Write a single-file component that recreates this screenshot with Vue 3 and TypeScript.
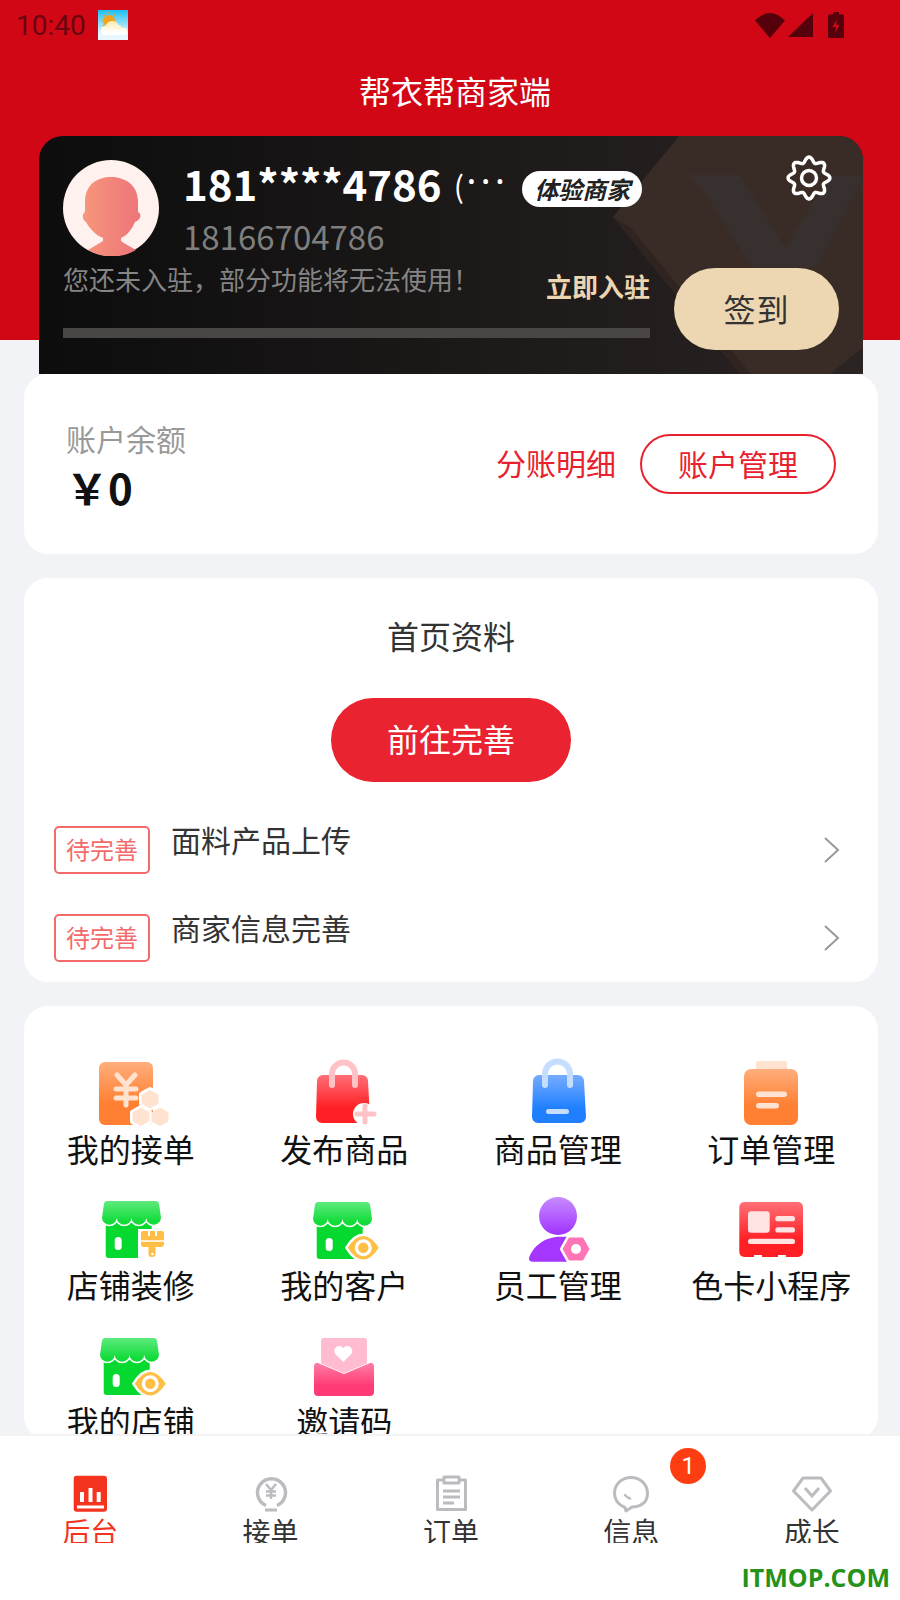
<template>
  <div class="page">
    <!-- shared icons, referenced through <use> below -->
    <svg class="icon-defs" width="0" height="0" aria-hidden="true">
      <defs>
        <linearGradient id="g-orange" x1="0" y1="0" x2="0" y2="1">
          <stop offset="0" stop-color="#ffae7c" />
          <stop offset="0.65" stop-color="#ff8033" />
        </linearGradient>
        <linearGradient id="g-red" x1="0" y1="0" x2="0" y2="1">
          <stop offset="0" stop-color="#ff6f76" />
          <stop offset="0.7" stop-color="#ff1f24" />
        </linearGradient>
        <linearGradient id="g-blue" x1="0" y1="0" x2="0" y2="1">
          <stop offset="0" stop-color="#76acff" />
          <stop offset="0.7" stop-color="#1f7fff" />
        </linearGradient>
        <linearGradient id="g-green" x1="0" y1="0" x2="0" y2="1">
          <stop offset="0" stop-color="#5eea7e" />
          <stop offset="0.85" stop-color="#12dc3a" />
        </linearGradient>
        <linearGradient id="g-purple" x1="0" y1="0" x2="0" y2="1">
          <stop offset="0" stop-color="#c78bff" />
          <stop offset="1" stop-color="#a032ff" />
        </linearGradient>
        <linearGradient id="g-pink" x1="0" y1="0" x2="0" y2="1">
          <stop offset="0" stop-color="#ff7fa6" />
          <stop offset="0.7" stop-color="#ff3a74" />
        </linearGradient>
        <linearGradient id="g-avatar" x1="0" y1="0" x2="1" y2="0">
          <stop offset="0" stop-color="#f7967c" />
          <stop offset="1" stop-color="#ed7479" />
        </linearGradient>
        <linearGradient id="g-sky" x1="0" y1="0" x2="0" y2="1">
          <stop offset="0" stop-color="#1dbff3" />
          <stop offset="0.8" stop-color="#e6f8fd" />
        </linearGradient>
        <linearGradient id="g-cloud" x1="0" y1="0" x2="0" y2="1">
          <stop offset="0" stop-color="#ffe9a8" />
          <stop offset="0.8" stop-color="#ffffff" />
        </linearGradient>
      </defs>

      <symbol id="ic-order" viewBox="0 0 80 70">
        <rect x="8" y="4" width="54" height="63" rx="6" fill="url(#g-orange)" />
        <path d="M26 17l9 10 9-10M35 27v20M25 31h20M25 40h20" fill="none" stroke="#ffe3d0" stroke-width="5" stroke-linecap="round" stroke-linejoin="round" />
        <g fill="#fff" stroke="#fff" stroke-width="6" stroke-linejoin="round">
          <polygon points="59,32 67,36.5 67,45.5 59,50 51,45.500 51,36.500" />
          <polygon points="50,50 58,54.500 58,63.500 50,68 42,63.500 42,54.500" />
        </g>
        <g fill="#ffe3d0" stroke="#ffe3d0" stroke-width="1" stroke-linejoin="round">
          <polygon points="59,32.500 67,37 67,45.500 59,50 51,45.500 51,37" />
          <polygon points="50,50 58,54.500 58,63 50,67.500 42,63 42,54.500" />
          <polygon points="69,50 77,54.500 77,63 69,67.500 61,63 61,54.500" />
        </g>
      </symbol>

      <symbol id="ic-publish" viewBox="0 0 80 70">
        <path d="M19 17h39a6 6 0 0 1 6 6l2 36a6 6 0 0 1-6 6H18a6 6 0 0 1-6-6l1-36a6 6 0 0 1 6-6z" fill="url(#g-red)" />
        <path d="M28 27V16a11 11 0 0 1 23 0v11" fill="none" stroke="#ffc2c7" stroke-width="6" stroke-linecap="round" />
        <circle cx="60" cy="56" r="11" fill="#fff" />
        <path d="M61 48v16M53 56h17" stroke="#ffc2c7" stroke-width="5" stroke-linecap="round" />
      </symbol>

      <symbol id="ic-goods" viewBox="0 0 80 70">
        <path d="M21 17h39a6 6 0 0 1 6 6l2 36a6 6 0 0 1-6 6H20a6 6 0 0 1-6-6l1-36a6 6 0 0 1 6-6z" fill="url(#g-blue)" />
        <path d="M27 27V16a12 12 0 0 1 25 0v11" fill="none" stroke="#c5deff" stroke-width="6" stroke-linecap="round" />
        <rect x="28" y="51" width="23" height="5" rx="2.500" fill="#c5deff" />
      </symbol>

      <symbol id="ic-orders" viewBox="0 0 80 70">
        <rect x="25" y="3" width="31" height="12" rx="2" fill="#ffe3d0" />
        <rect x="13" y="11" width="54" height="56" rx="7" fill="url(#g-orange)" />
        <rect x="25" y="33.500" width="31" height="5.500" rx="2.700" fill="#ffe3d0" />
        <rect x="25" y="45" width="23" height="5.500" rx="2.700" fill="#ffe3d0" />
      </symbol>

      <symbol id="ic-store" viewBox="0 0 80 70">
        <rect x="12.700" y="25" width="46" height="40" rx="3" fill="#05d92f" />
        <rect x="21.700" y="44" width="7" height="13" rx="3.500" fill="#fff" />
        <path d="M14 8h49a3 3 0 0 1 3 2.500L68 25a7.400 7.400 0 0 1-14.750 0a7.400 7.400 0 0 1-14.750 0a7.400 7.400 0 0 1-14.750 0a7.400 7.400 0 0 1-14.750 0L11 10.500A3 3 0 0 1 14 8z" fill="url(#g-green)" stroke="#fff" stroke-width="3" paint-order="stroke" />
      </symbol>

      <symbol id="ic-store-brush" viewBox="0 0 80 70">
        <use href="#ic-store" x="2" y="-1" width="80" height="70" />
        <path d="M47 35h28v34H47z" fill="#fff" />
        <path d="M50 39a2 2 0 0 1 2-2h5v5h2v-5h5v5h2v-5h5a2 2 0 0 1 2 2v11a3 3 0 0 1-3 3h-5.500v6.500a3.500 3.500 0 0 1-7 0V53H53a3 3 0 0 1-3-3z" fill="#ffbe45" />
        <path d="M50 47h23" stroke="#fff" stroke-width="1.500" />
        <circle cx="61.500" cy="60" r="1.300" fill="#fff" />
      </symbol>

      <symbol id="ic-store-eye" viewBox="0 0 80 70">
        <use href="#ic-store" width="80" height="70" />
        <path d="M43.800 53.700Q51 42 59.300 42Q67 42 74.800 53.700Q67 65.400 59.300 65.400Q51 65.400 43.800 53.700z" fill="#ffbe45" stroke="#fff" stroke-width="5" paint-order="stroke" />
        <circle cx="59.300" cy="53.700" r="8.500" fill="#fff" />
        <circle cx="59.300" cy="53.700" r="5.200" fill="#ffbe45" />
      </symbol>

      <symbol id="ic-staff" viewBox="0 0 80 70">
        <circle cx="40" cy="22" r="19" fill="url(#g-purple)" />
        <path d="M14 67.700a3 3 0 0 1-3-3.700C15 52 27 42.700 42 42.700H54V67.700z" fill="#a436ff" />
        <polygon points="44.500,55 51,43.500 65,43.500 71.500,55 65,66.500 51,66.500" fill="#ff74b4" stroke="#fff" stroke-width="5" stroke-linejoin="round" paint-order="stroke" />
        <circle cx="58" cy="55" r="5" fill="#fff" />
      </symbol>

      <symbol id="ic-palette" viewBox="0 0 80 70">
        <rect x="8.300" y="8" width="63.700" height="55" rx="5" fill="url(#g-red)" />
        <rect x="17" y="17.300" width="21.700" height="21.400" rx="3" fill="#ffe3e3" />
        <rect x="44.300" y="22" width="19.700" height="5.300" rx="2.600" fill="#ffe3e3" />
        <rect x="44.300" y="33.300" width="19.700" height="5.300" rx="2.600" fill="#ffe3e3" />
        <rect x="17" y="44.700" width="47" height="5.300" rx="2.600" fill="#ffe3e3" />
        <rect x="23" y="61" width="8" height="2" fill="#fff" />
        <rect x="47" y="61" width="8" height="2" fill="#fff" />
      </symbol>

      <symbol id="ic-invite" viewBox="0 0 80 70">
        <path d="M20 8h40a3 3 0 0 1 3 3v32H17V11a3 3 0 0 1 3-3z" fill="#ffbcd1" />
        <path d="M39.300 32l-8-8a5 5 0 0 1 8-6a5 5 0 0 1 8 6z" fill="#fff" />
        <path d="M10 36a3 3 0 0 1 4-3l26 11l26-11a3 3 0 0 1 4 3v26a4 4 0 0 1-4 4H14a4 4 0 0 1-4-4z" fill="url(#g-pink)" stroke="#fff" stroke-width="1.500" paint-order="stroke" />
      </symbol>
    </svg>

    <div class="main">
      <header class="status">
        <div class="status-left">
          <span class="clock">10:40</span>
          <svg class="weather" viewBox="0 0 30 30" width="30" height="30" aria-hidden="true">
            <rect width="30" height="30" fill="url(#g-sky)" />
            <circle cx="11" cy="11" r="6" fill="#f6a21e" />
            <path d="M11 2v2M3 10h2M5 4.500l1.500 1.500M17 4.500l-1.500 1.500M4.500 16l1.500-1" stroke="#f6a21e" stroke-width="1.200" />
            <path d="M7 25a4.500 4.500 0 0 1 .5-9a7 7 0 0 1 13-1a5.500 5.500 0 0 1 3.500 3a3.600 3.600 0 0 1 3 7z" fill="url(#g-cloud)" />
          </svg>
        </div>
        <div class="status-right">
          <svg viewBox="0 0 30 25" width="30" height="25" aria-hidden="true">
            <path d="M0 7.500Q15-7.500 30 7.500L15 25z" fill="#55000a" />
          </svg>
          <svg viewBox="0 0 25 24" width="25" height="24" aria-hidden="true">
            <path d="M25 0v24H0z" fill="#55000a" />
          </svg>
          <svg class="battery" viewBox="0 0 16 26" width="16" height="26" aria-hidden="true">
            <path d="M5 0h6v2.500h3.500a1.500 1.500 0 0 1 1.500 1.500v20.500a1.500 1.500 0 0 1-1.500 1.500H1.500A1.500 1.500 0 0 1 0 24.500V4a1.500 1.500 0 0 1 1.500-1.500H5z" fill="#55000a" />
            <path d="M9 7L4.500 15H8l-1 6 4.500-8H8z" fill="#d10716" />
          </svg>
        </div>
      </header>

      <h1 class="title">帮衣帮商家端</h1>

      <section class="vip">
        <svg class="vip-art" viewBox="0 0 824 238" aria-hidden="true">
          <polygon points="574,81 640,0 824,0 824,238 701,238" fill="#392c26" />
          <polygon points="824,211 791,238 824,238" fill="#2a2423" />
          <polygon points="574,81 592,92 712,238 701,238" fill="#2f2420" />
          <polygon points="649,39 701,39 746,112 791,40 824,40 778,131 713,131 664,54" fill="#38302f" />
        </svg>

        <div class="vip-top">
          <svg class="avatar" viewBox="0 0 96 96" aria-hidden="true">
            <circle cx="48" cy="48" r="48" fill="#fff1ee" />
            <path d="M48 17C35 17 22 24 22 42L22 52C19 54 19 60 23 62C28 71 35 76 40 78L40 81C35 84 30 87 25 90A48 48 0 0 0 73 90C68 87 62 84 58 81L58 78C63 76 68 71 72 62C78 60 79 54 75 52L75 42C75 24 61 17 48 17Z" fill="url(#g-avatar)" />
          </svg>
          <div class="vip-info">
            <div class="name-row">
              <span class="name">181****4786</span>
              <span class="name-paren">(</span>
              <span class="name-dots">•••</span>
              <span class="level">体验商家</span>
            </div>
            <div class="phone">18166704786</div>
          </div>
          <svg class="gear" viewBox="0 0 46 46" width="46" height="46" aria-hidden="true">
            <path :d="gearPath" fill="none" stroke="#fff" stroke-width="3.500" stroke-linejoin="round" />
            <circle cx="23" cy="23" r="7.500" fill="none" stroke="#fff" stroke-width="3.500" />
          </svg>
        </div>

        <div class="vip-bottom">
          <div class="vip-progress">
            <div class="notice-row">
              <span class="notice">您还未入驻，部分功能将无法使用！</span>
              <span class="join">立即入驻</span>
            </div>
            <div class="bar"></div>
          </div>
          <button class="sign" type="button">签到</button>
        </div>
      </section>

      <section class="card balance">
        <div class="balance-left">
          <div class="balance-label">账户余额</div>
          <div class="balance-value">￥0</div>
        </div>
        <div class="balance-right">
          <span class="split">分账明细</span>
          <button class="manage" type="button">账户管理</button>
        </div>
      </section>

      <section class="card profile">
        <div class="profile-title">首页资料</div>
        <button class="go" type="button">前往完善</button>
        <div class="todo-list">
          <div v-for="todo in todos" :key="todo" class="todo">
            <span class="todo-tag">待完善</span>
            <span class="todo-text">{{ todo }}</span>
            <svg class="chevron" viewBox="0 0 18 26" width="18" height="26" aria-hidden="true">
              <path d="M2 1l13 12L2 25" fill="none" stroke="#98989d" stroke-width="2" />
            </svg>
          </div>
        </div>
      </section>

      <section class="card tools">
        <div v-for="tool in tools" :key="tool.label" class="tool">
          <svg class="tool-icon" viewBox="0 0 80 70" width="80" height="70" aria-hidden="true">
            <use :href="`#ic-${tool.icon}`" width="80" height="70" />
          </svg>
          <span class="tool-label">{{ tool.label }}</span>
        </div>
      </section>
    </div>

    <nav class="tabbar">
      <div class="tab active">
        <svg viewBox="0 0 40 40" width="40" height="40" aria-hidden="true">
          <rect x="3.700" y="1.700" width="33.300" height="36" rx="3" fill="#f5341f" />
          <path d="M12 28V18M20.500 28V14M28.700 28V18" stroke="#fff" stroke-width="4" />
          <path d="M7 33h27" stroke="#fff" stroke-width="3" />
        </svg>
        <span class="tab-label">后台</span>
      </div>
      <div class="tab">
        <svg viewBox="0 0 40 40" width="40" height="40" aria-hidden="true">
          <path d="M15 31.500a14 14 0 1 1 11 0" fill="none" stroke="#bcbcc0" stroke-width="3.500" />
          <rect x="14" y="34.500" width="12" height="3" fill="#bcbcc0" />
          <path d="M15 10l5 6 5-6M20 16v9M15 17.500h10M15 21.500h10" fill="none" stroke="#bcbcc0" stroke-width="2.500" />
        </svg>
        <span class="tab-label">接单</span>
      </div>
      <div class="tab">
        <svg viewBox="0 0 40 40" width="40" height="40" aria-hidden="true">
          <path d="M13 6H6.500v29.500h28V6H28M13 3h15v6H13z" fill="none" stroke="#bcbcc0" stroke-width="3" stroke-linejoin="round" />
          <path d="M12 17h17M12 23h17M12 29h11" stroke="#bcbcc0" stroke-width="3" />
        </svg>
        <span class="tab-label">订单</span>
      </div>
      <div class="tab">
        <svg viewBox="0 0 40 40" width="40" height="40" aria-hidden="true">
          <path d="M14 33.500C7 31 3.500 25 3.500 19.500C3.500 10 11 3.500 20 3.500s16.500 6.500 16.500 16S29 33 21 33l-6 4z" fill="none" stroke="#bcbcc0" stroke-width="3" stroke-linejoin="round" />
          <path d="M14 21q2 2.500 5 3.500" fill="none" stroke="#bcbcc0" stroke-width="2.500" stroke-linecap="round" />
        </svg>
        <span class="tab-label">信息</span>
        <span class="badge">1</span>
      </div>
      <div class="tab">
        <svg viewBox="0 0 40 40" width="40" height="40" aria-hidden="true">
          <path d="M11 4h18l9.500 13L20 36 1.500 17z" fill="none" stroke="#bcbcc0" stroke-width="3" stroke-linejoin="round" />
          <path d="M13 14l7 8 7-8" fill="none" stroke="#bcbcc0" stroke-width="3" />
        </svg>
        <span class="tab-label">成长</span>
      </div>
    </nav>

    <div class="watermark">ITMOP.COM</div>
  </div>
</template>

<script setup lang="ts">
interface Tool {
  label: string;
  icon: string;
}

const todos = ['面料产品上传', '商家信息完善']

const tools: Tool[] = [
  {label: '我的接单', icon: 'order'},
  {label: '发布商品', icon: 'publish'},
  {label: '商品管理', icon: 'goods'},
  {label: '订单管理', icon: 'orders'},
  {label: '店铺装修', icon: 'store-brush'},
  {label: '我的客户', icon: 'store-eye'},
  {label: '员工管理', icon: 'staff'},
  {label: '色卡小程序', icon: 'palette'},
  {label: '我的店铺', icon: 'store-eye'},
  {label: '邀请码', icon: 'invite'},
]

// Scalloped outline for the settings gear: radius swings with the tooth angle.
function buildGear(teeth: number, base: number, swing: number): string {
  const points: string[] = []
  for (let i = 0; i < 160; i++) {
    const a = (i / 160) * Math.PI * 2
    const r = base + swing * Math.cos(teeth * a)
    points.push(`${(23 + r * Math.sin(a)).toFixed(2)} ${(23 - r * Math.cos(a)).toFixed(2)}`)
  }
  return `M${points.join('L')}Z`
}

const gearPath = buildGear(8, 18.3, 2.6)
</script>

<style>
html,
body {
  margin: 0;
  background: #f2f3f7;
}
</style>

<style scoped>
.page {
  position: relative;
  display: flex;
  flex-direction: column;
  width: 900px;
  height: 1600px;
  overflow: hidden;
  background: linear-gradient(#d10716 340px, #f2f3f7 340px);
  font-family: "Noto Sans CJK SC", "Noto Sans", sans-serif;
  color: #333;
}

.icon-defs {
  position: absolute;
}

.main {
  flex: 1;
  min-height: 0;
  overflow: hidden;
}

.status {
  display: flex;
  align-items: center;
  justify-content: space-between;
  height: 50px;
  padding: 0 56px 0 16px;
  box-sizing: border-box;
}

.status-left,
.status-right {
  display: flex;
  align-items: center;
}

.status-left {
  gap: 12px;
}

.status-right {
  gap: 3px;
}

.battery {
  margin-left: 12px;
}

.clock {
  font-family: Roboto, sans-serif;
  font-size: 28px;
  color: #6a0510;
}

.title {
  margin: 0;
  padding-left: 10px;
  height: 86px;
  line-height: 80px;
  font-size: 32px;
  font-weight: 400;
  text-align: center;
  color: #fff;
}

.vip {
  position: relative;
  box-sizing: border-box;
  height: 238px;
  margin: 0 37px 0 39px;
  padding: 24px 24px 0;
  border-radius: 24px 24px 0 0;
  overflow: hidden;
  background: linear-gradient(90deg, #0d0d0d, #2a2423);
}

.vip-art {
  position: absolute;
  top: 0;
  left: 0;
  width: 824px;
  height: 238px;
}

.vip-top,
.vip-bottom {
  position: relative;
  display: flex;
}

.vip-top {
  height: 96px;
}

.avatar {
  flex: none;
  width: 96px;
  height: 96px;
}

.vip-info {
  margin-left: 24px;
}

.name-row {
  display: flex;
  align-items: center;
  height: 50px;
}

.name {
  margin-top: -4px;
  font-size: 42px;
  font-weight: 700;
  line-height: 46px;
  color: #fff;
}

.name-paren {
  margin-left: 12px;
  font-size: 30px;
  line-height: 50px;
  color: #fff;
}

.name-dots {
  margin: -6px 0 0 4px;
  font-family: Roboto, sans-serif;
  font-size: 20px;
  font-weight: 700;
  letter-spacing: 7px;
  color: #fff;
}

.level {
  margin-left: 12px;
  width: 120px;
  height: 36px;
  margin-top: 8px;
  line-height: 36px;
  border-radius: 18px;
  background: #fff;
  font-size: 24px;
  font-weight: 700;
  font-style: italic;
  text-align: center;
  color: #222;
}

.phone {
  margin-top: 8px;
  font-size: 33px;
  line-height: 36px;
  color: #7f7f7f;
}

.gear {
  position: absolute;
  top: -5px;
  left: 723px;
}

.vip-progress {
  width: 587px;
  padding-top: 7px;
}

.notice-row {
  display: flex;
  justify-content: space-between;
  height: 65px;
}

.notice {
  font-size: 26px;
  line-height: 32px;
  color: #858585;
}

.join {
  margin-top: 7px;
  font-size: 26px;
  font-weight: 700;
  line-height: 32px;
  color: #ecd5b1;
}

.bar {
  height: 10px;
  background: #4a4645;
}

.sign {
  width: 165px;
  height: 82px;
  margin: 12px 0 0 24px;
  padding: 0 0 2px;
  border: 0;
  border-radius: 41px;
  background: #edd6b2;
  font: inherit;
  font-size: 32px;
  letter-spacing: 1px;
  color: #333;
}

.card {
  margin: 0 22px 0 24px;
  border-radius: 24px;
  background: #fff;
}

.balance {
  position: relative;
  display: flex;
  justify-content: space-between;
  height: 180px;
}

.balance-left {
  padding: 44px 0 0 42px;
}

.balance-label {
  font-size: 30px;
  line-height: 40px;
  color: #999;
}

.balance-value {
  margin: -1px 0 0;
  font-size: 42px;
  font-weight: 700;
  line-height: 60px;
  color: #111;
}

.balance-right {
  display: flex;
  align-items: center;
  gap: 24px;
  padding-right: 42px;
}

.split {
  padding-bottom: 4px;
  font-size: 30px;
  color: #e8212f;
}

.manage {
  box-sizing: border-box;
  width: 196px;
  height: 60px;
  padding: 0 0 2px;
  border: 2px solid #e8212f;
  border-radius: 30px;
  background: #fff;
  font: inherit;
  font-size: 30px;
  color: #e8212f;
}

.profile {
  margin-top: 24px;
  height: 404px;
  box-sizing: border-box;
  padding-top: 40px;
}

.profile-title {
  font-size: 32px;
  line-height: 34px;
  text-align: center;
  color: #333;
}

.go {
  display: block;
  width: 240px;
  height: 84px;
  margin: 46px auto 0;
  padding: 0 0 4px;
  border: 0;
  border-radius: 42px;
  background: #ea2330;
  font: inherit;
  font-size: 32px;
  color: #fff;
}

.todo-list {
  display: flex;
  flex-direction: column;
  gap: 40px;
  margin-top: 44px;
  padding: 0 37px 0 30px;
}

.todo {
  display: flex;
  height: 48px;
}

.todo-tag {
  box-sizing: border-box;
  width: 96px;
  height: 48px;
  border: 2px solid #f36b6b;
  border-radius: 5px;
  font-size: 24px;
  line-height: 42px;
  text-align: center;
  color: #f36b6b;
}

.todo-text {
  flex: 1;
  margin-left: 21px;
  font-size: 30px;
  line-height: 26px;
  color: #333;
}

.chevron {
  align-self: center;
}

.tools {
  display: grid;
  grid-template-columns: repeat(4, 1fr);
  row-gap: 26px;
  margin-top: 24px;
  padding-top: 52px;
}

.tool {
  display: flex;
  flex-direction: column;
  align-items: center;
}

.tool-icon {
  display: block;
}

.tool-label {
  font-size: 32px;
  line-height: 40px;
  color: #111;
  white-space: nowrap;
}

.tabbar {
  position: relative;
  flex: none;
  display: grid;
  grid-template-columns: repeat(5, 180.4px);
  box-sizing: border-box;
  height: 166px;
  padding-top: 38px;
  border-top: 2px solid #f3f3f3;
  background: #fff;
}

.tab {
  position: relative;
  display: flex;
  flex-direction: column;
  align-items: center;
}

.tab-label {
  height: 29px;
  overflow: hidden;
  font-size: 28px;
  line-height: 34px;
  color: #333;
}

.tab.active .tab-label {
  color: #f5341f;
}

.badge {
  position: absolute;
  top: -26px;
  left: 129px;
  width: 36px;
  height: 36px;
  border-radius: 50%;
  background: #ff3d12;
  font-family: Roboto, sans-serif;
  font-size: 24px;
  line-height: 36px;
  text-align: center;
  color: #fff;
}

.watermark {
  position: absolute;
  right: 10px;
  bottom: 6px;
  font-family: "Open Sans", sans-serif;
  font-size: 25px;
  font-weight: 700;
  line-height: 34px;
  color: #25931b;
}
</style>
